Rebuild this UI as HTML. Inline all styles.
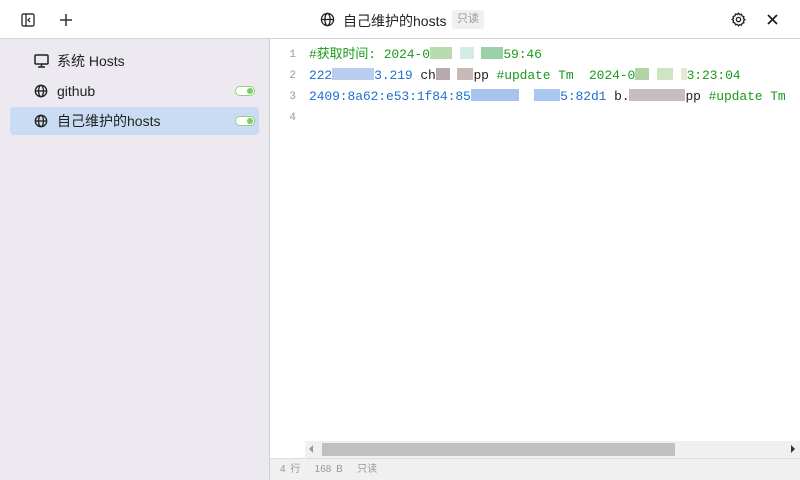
<!DOCTYPE html>
<html><head><meta charset="utf-8"><style>
*{margin:0;padding:0;box-sizing:border-box}
body{width:800px;height:480px;overflow:hidden;background:#fff;font-family:"Liberation Sans","Noto Sans CJK SC",sans-serif;position:relative;color:#222}
.top{position:absolute;left:0;top:0;width:800px;height:39px;background:#fff;border-bottom:1px solid #d4d4d4}
.side{position:absolute;left:0;top:39px;width:270px;height:441px;background:#ece9f0;border-right:1px solid #d4d4d4}
.item{position:absolute;left:10px;width:249px;height:28px;border-radius:4px;font-size:14px;line-height:28px;padding-left:47px;color:#222}
.item svg{position:absolute;left:24px;top:7px}
.sel{background:#cadcf3}
.tog{position:absolute;left:225px;top:9px;width:20px;height:10px;border-radius:6px;border:1.5px solid #8fd47b;background:#fff}
.tog:after{content:"";position:absolute;right:1px;top:1px;width:6px;height:6px;border-radius:50%;background:#7dcc6b}
.code{position:absolute;left:270px;top:41px;font-family:"Liberation Mono","Noto Sans CJK SC",monospace;font-size:13px}
.ln{position:absolute;left:0;width:26px;text-align:right;color:#999;font-size:11px;line-height:16px}
.tx{position:absolute;left:39px;white-space:pre;letter-spacing:-0.1px;line-height:16px}
.g{color:#1a9a1a}.b{color:#1f6fd1}.k{color:#222}
.bl{display:inline-block;height:12px;vertical-align:-1px}
.sb{position:absolute;left:305px;top:441px;width:495px;height:17px;background:#f0f0f0}
.thumb{position:absolute;left:17px;top:2px;width:353px;height:13px;background:#c0c0c0}
.foot{position:absolute;left:270px;top:458px;width:530px;height:22px;background:#f0f0f0;border-top:1px solid #ddd;font-size:10px;color:#999;line-height:21px;padding-left:10px;word-spacing:2px}
</style></head><body>
<div class="top">
<svg style="position:absolute;left:21px;top:13px" width="14" height="14" viewBox="0 0 14 14" fill="none" stroke="#333" stroke-width="1.4"><rect x="1" y="1" width="12" height="12" rx="1.5"/><line x1="5" y1="1" x2="5" y2="13"/><path d="M9 5l-2 2 2 2"/></svg>
<svg style="position:absolute;left:59px;top:13px" width="14" height="14" viewBox="0 0 14 14" stroke="#333" stroke-width="1.5"><line x1="7" y1="1" x2="7" y2="13"/><line x1="1" y1="7" x2="13" y2="7"/></svg>
<svg style="position:absolute;left:320px;top:12px" width="15" height="15" viewBox="0 0 16 16" fill="none" stroke="#222" stroke-width="1.4"><circle cx="8" cy="8" r="6.5"/><ellipse cx="8" cy="8" rx="2.8" ry="6.5"/><line x1="1.5" y1="8" x2="14.5" y2="8"/></svg>
<div style="position:absolute;left:343px;top:11px;font-size:14px;color:#222">自己维护的hosts</div>
<div style="position:absolute;left:452px;top:10px;width:32px;height:19px;background:#f0f0f0;border-radius:3px;font-size:11px;color:#999;text-align:center;line-height:19px">只读</div>
<svg style="position:absolute;left:731px;top:12px" width="15" height="15" viewBox="0 0 16 16" fill="none" stroke="#222" stroke-width="1.4"><path d="M8 1.2l1.2 1.6 2-.4.6 1.9 1.9.7-.4 2 1.5 1.2-1.5 1.3.4 2-1.9.6-.6 1.9-2-.4L8 14.8l-1.2-1.6-2 .4-.6-1.9-1.9-.6.4-2L1.2 8l1.5-1.2-.4-2 1.9-.7.6-1.9 2 .4z"/><circle cx="8" cy="8" r="2.3"/></svg>
<svg style="position:absolute;left:767px;top:14px" width="11" height="11" viewBox="0 0 11 11" stroke="#222" stroke-width="1.8"><line x1="1" y1="1" x2="10" y2="10"/><line x1="10" y1="1" x2="1" y2="10"/></svg>
</div>
<div class="side">
<div class="item" style="top:8px"><svg width="15" height="14" viewBox="0 0 15 14" fill="none" stroke="#222" stroke-width="1.5"><rect x="1" y="1" width="13" height="9" rx="1"/><line x1="4" y1="13" x2="11" y2="13"/><line x1="7.5" y1="10" x2="7.5" y2="13"/></svg>系统 Hosts</div>
<div class="item" style="top:38px"><svg width="14" height="14" viewBox="0 0 16 16" fill="none" stroke="#222" stroke-width="1.5"><circle cx="8" cy="8" r="6.5"/><ellipse cx="8" cy="8" rx="2.8" ry="6.5"/><line x1="1.5" y1="8" x2="14.5" y2="8"/></svg>github<div class="tog"></div></div>
<div class="item sel" style="top:68px"><svg width="14" height="14" viewBox="0 0 16 16" fill="none" stroke="#222" stroke-width="1.5"><circle cx="8" cy="8" r="6.5"/><ellipse cx="8" cy="8" rx="2.8" ry="6.5"/><line x1="1.5" y1="8" x2="14.5" y2="8"/></svg>自己维护的hosts<div class="tog"></div></div>
</div>
<div class="code">
<div class="ln" style="top:6px">1</div><div class="tx g" style="top:6px">#获取时间: 2024-0<span class="bl" style="width:22px;background:#b8dcb0"></span> <span class="bl" style="width:14px;background:#d4ece4"></span> <span class="bl" style="width:22px;background:#9cd0a8"></span>59:46</div>
<div class="ln" style="top:27px">2</div><div class="tx" style="top:27px"><span class="b">222<span class="bl" style="width:42px;background:#b8cdf0"></span>3.219</span> <span class="k">ch<span class="bl" style="width:14px;background:#b8a8b0"></span> <span class="bl" style="width:16px;background:#c8b8b8"></span>pp</span> <span class="g">#update Tm  2024-0<span class="bl" style="width:14px;background:#b0d4a8"></span> <span class="bl" style="width:16px;background:#cfe4c0"></span> <span class="bl" style="width:6px;background:#e8e8d0"></span>3:23:04</span></div>
<div class="ln" style="top:48px">3</div><div class="tx" style="top:48px"><span class="b">2409:8a62:e53:1f84:85<span class="bl" style="width:48px;background:#a8c4ec"></span>  <span class="bl" style="width:26px;background:#a8c8f0"></span>5:82d1</span> <span class="k">b.<span class="bl" style="width:56px;background:#c8bcc0"></span>pp</span> <span class="g">#update Tm</span></div>
<div class="ln" style="top:69px">4</div>
</div>
<div class="sb"><div style="position:absolute;left:4px;top:4px;width:0;height:0;border-top:4px solid transparent;border-bottom:4px solid transparent;border-right:4px solid #999"></div><div class="thumb"></div><div style="position:absolute;right:5px;top:4px;width:0;height:0;border-top:4px solid transparent;border-bottom:4px solid transparent;border-left:4px solid #333"></div></div>
<div class="foot">4 行 &nbsp; 168 B &nbsp; 只读</div>
</body></html>
